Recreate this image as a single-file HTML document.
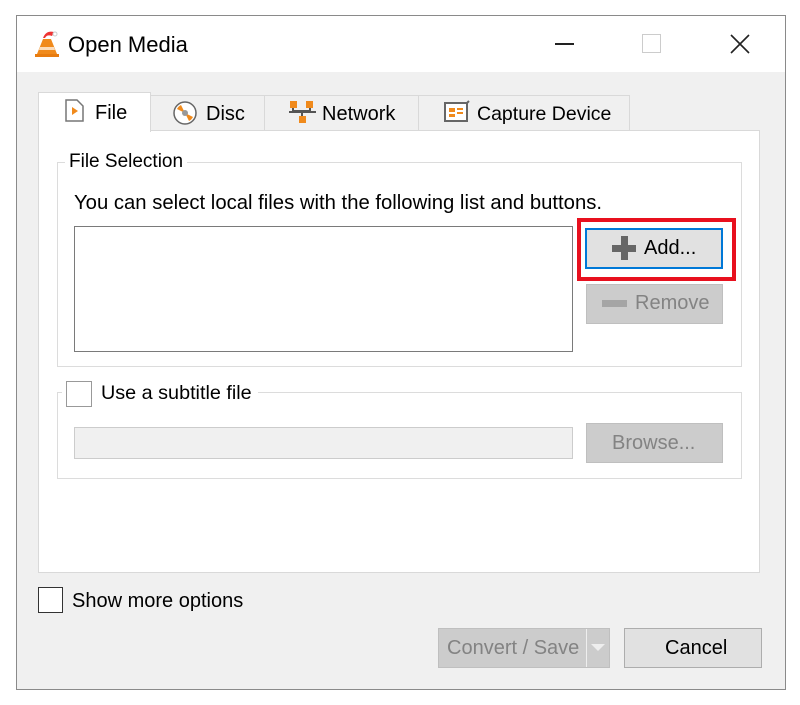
<!DOCTYPE html>
<html><head><style>
*{box-sizing:border-box}
body{margin:0;width:800px;height:705px;background:#fff;font-family:"Liberation Sans",sans-serif;position:relative;overflow:hidden;color:#000}
.a{position:absolute}
.t{font-size:20px;white-space:nowrap}
</style></head><body>
<div class="a" style="left:16px;top:15px;width:770px;height:675px;border:1px solid #8a8a8a;background:#f0f0f0"></div>
<div class="a" style="left:17px;top:16px;width:768px;height:56px;background:#fff"></div>
<svg class="a" style="left:34px;top:28px" width="26" height="30" viewBox="0 0 26 30"><path d="M9 10 Q12 2 20 4 L18 8 Q13 6 11 10Z" fill="#e33"/><circle cx="21" cy="6" r="2" fill="#fff" stroke="#ccc"/><path d="M9 11 L17 11 L23 26 L3 26Z" fill="#f08a1c"/><path d="M6 19 L20 19 L21 22 L5 22Z" fill="#fff" opacity=".7"/><rect x="1" y="26" width="24" height="3" fill="#e87c10"/></svg>
<div class="a t" style="left:68px;top:32px;font-size:22px">Open Media</div>
<div class="a" style="left:555px;top:43px;width:19px;height:1.5px;background:#222"></div>
<div class="a" style="left:642px;top:34px;width:19px;height:19px;border:1px solid #ccc"></div>
<svg class="a" style="left:729px;top:33px" width="22" height="22"><path d="M2 2L20 20M20 2L2 20" stroke="#222" stroke-width="1.6"/></svg>
<div class="a" style="left:150px;top:95px;width:480px;height:36px;background:#f0f0f0;border:1px solid #d9d9d9;border-bottom:none"></div>
<div class="a" style="left:264px;top:95px;width:1px;height:35px;background:#d9d9d9"></div>
<div class="a" style="left:418px;top:95px;width:1px;height:35px;background:#d9d9d9"></div>
<div class="a" style="left:38px;top:130px;width:722px;height:443px;background:#fff;border:1px solid #d9d9d9"></div>
<div class="a" style="left:38px;top:92px;width:113px;height:40px;background:#fff;border:1px solid #d9d9d9;border-bottom:none"></div>
<svg class="a" style="left:64px;top:98px" width="22" height="26"><path d="M2 2H13L19 8V23H2Z" fill="#fff" stroke="#777" stroke-width="1.5"/><path d="M8 9L14 13L8 17Z" fill="#f08a1c"/></svg>
<div class="a t" style="left:95px;top:102px">File</div>
<svg class="a" style="left:172px;top:100px" width="26" height="26"><circle cx="13" cy="13" r="11" fill="#fff" stroke="#666" stroke-width="1.5"/><path d="M13 13L5 9A9 9 0 0 1 9 5Z M13 13L21 17A9 9 0 0 1 17 21Z" fill="#f08a1c"/><circle cx="13" cy="13" r="3" fill="#999"/></svg>
<div class="a t" style="left:206px;top:103px">Disc</div>
<svg class="a" style="left:289px;top:100px" width="27" height="24"><rect x="1" y="1" width="7" height="7" fill="#f08a1c"/><rect x="17" y="1" width="7" height="7" fill="#f08a1c"/><rect x="10" y="16" width="7" height="7" fill="#f08a1c"/><path d="M4 8V11H21V8M0 12H27M13 11V16" stroke="#555" stroke-width="2" fill="none"/></svg>
<div class="a t" style="left:322px;top:103px">Network</div>
<svg class="a" style="left:444px;top:100px" width="26" height="24"><rect x="1" y="3" width="22" height="18" fill="#fff" stroke="#666" stroke-width="2"/><rect x="5" y="8" width="6" height="4" fill="#f08a1c"/><rect x="13" y="8" width="6" height="2" fill="#f08a1c"/><rect x="13" y="12" width="6" height="2" fill="#f08a1c"/><rect x="5" y="14" width="6" height="3" fill="#f08a1c"/><path d="M23 3L25 1" stroke="#666" stroke-width="2"/></svg>
<div class="a t" style="left:477px;top:103px;font-size:19.5px">Capture Device</div>
<div class="a" style="left:57px;top:162px;width:685px;height:205px;border:1px solid #dcdcdc"></div>
<div class="a t" style="left:65px;top:151px;background:#fff;padding:0 4px;font-size:19px">File Selection</div>
<div class="a t" style="left:74px;top:192px;font-size:20.3px">You can select local files with the following list and buttons.</div>
<div class="a" style="left:74px;top:226px;width:499px;height:126px;border:1px solid #7a7a7a;background:#fff"></div>
<div class="a" style="left:577px;top:218px;width:159px;height:63px;border:4px solid #e8101e"></div>
<div class="a" style="left:585px;top:228px;width:138px;height:41px;border:2px solid #0078d7;background:#e1e1e1"></div>
<div class="a" style="left:612px;top:236px;width:24px;height:24px"><div class="a" style="left:9px;top:0;width:7px;height:24px;background:#666"></div><div class="a" style="left:0;top:9px;width:24px;height:7px;background:#666"></div></div>
<div class="a t" style="left:644px;top:237px">Add...</div>
<div class="a" style="left:586px;top:284px;width:137px;height:40px;background:#cccccc;border:1px solid #bfbfbf"></div>
<div class="a" style="left:602px;top:300px;width:25px;height:7px;background:#a5a5a5"></div>
<div class="a t" style="left:635px;top:292px;color:#838383">Remove</div>
<div class="a" style="left:57px;top:392px;width:685px;height:87px;border:1px solid #dcdcdc"></div>
<div class="a" style="left:62px;top:380px;width:196px;height:26px;background:#fff"></div>
<div class="a" style="left:66px;top:381px;width:26px;height:26px;border:1px solid #999;background:#fff"></div>
<div class="a t" style="left:101px;top:382px;font-size:19.8px">Use a subtitle file</div>
<div class="a" style="left:74px;top:427px;width:499px;height:32px;border:1px solid #ccc;background:#f0f0f0"></div>
<div class="a" style="left:586px;top:423px;width:137px;height:40px;background:#cccccc;border:1px solid #bfbfbf"></div>
<div class="a t" style="left:612px;top:432px;color:#838383">Browse...</div>
<div class="a" style="left:38px;top:587px;width:25px;height:26px;border:1.5px solid #333;background:#fff"></div>
<div class="a t" style="left:72px;top:590px;font-size:20px">Show more options</div>
<div class="a" style="left:438px;top:628px;width:172px;height:40px;background:#cccccc;border:1px solid #bfbfbf"></div>
<div class="a" style="left:586px;top:629px;width:1px;height:38px;background:#eee"></div>
<div class="a t" style="left:447px;top:637px;color:#838383">Convert / Save</div>
<svg class="a" style="left:591px;top:644px" width="14" height="8"><path d="M0 0H14L7 7Z" fill="#eee"/></svg>
<div class="a" style="left:624px;top:628px;width:138px;height:40px;background:#e1e1e1;border:1px solid #adadad"></div>
<div class="a t" style="left:665px;top:637px">Cancel</div>
</body></html>
